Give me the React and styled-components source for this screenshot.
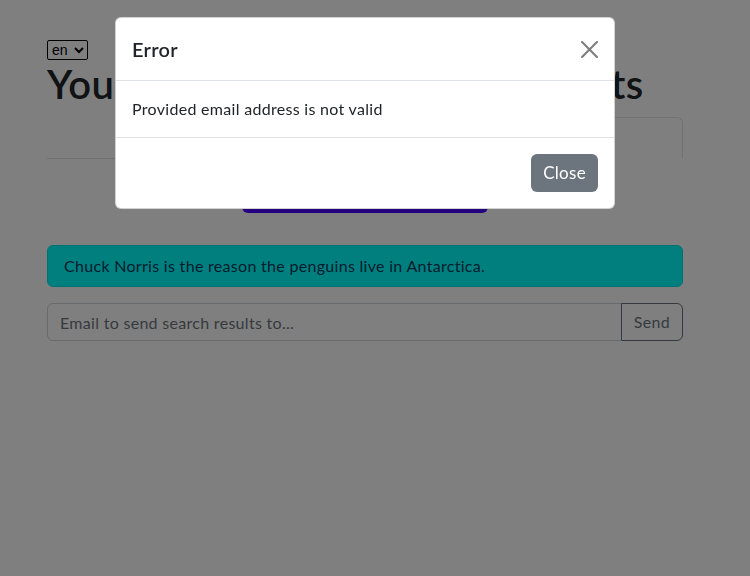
import styled, { createGlobalStyle } from "styled-components";

const GlobalStyle = createGlobalStyle`
  html, body {
    margin: 0;
    background: #fff;
  }
  body {
    font-family: Lato, "Liberation Sans", sans-serif;
    font-size: 16px;
    line-height: 1.5;
    letter-spacing: 0.3px;
    color: #212529;
  }
`;

const Page = styled.div`
  width: 636px;
  padding: 40px 0 0 47px;
`;

const LangSelect = styled.select`
  display: block;
  width: 41px;
  height: 20px;
  font-family: "Liberation Sans", sans-serif;
  font-size: 14px;
  color: #000;
  border: 1px solid #000;
  border-radius: 2px;
  background: #fff;
`;

const Title = styled.h1`
  margin: 0 0 9px;
  font-size: 40px;
  font-weight: 600;
  line-height: 1.2;
  letter-spacing: 0.3px;
  white-space: nowrap;
`;

const Tabs = styled.nav`
  display: flex;
  border-bottom: 1px solid #dee2e6;
`;

const Tab = styled.div`
  flex: 1;
  text-align: center;
  padding: 8px 16px;
  margin-bottom: -1px;
  border: 1px solid ${(p) => (p.$active ? "#dee2e6" : "transparent")};
  border-bottom-color: ${(p) => (p.$active ? "#fff" : "transparent")};
  border-radius: 6px 6px 0 0;
  background: ${(p) => (p.$active ? "#fff" : "transparent")};
  color: ${(p) => (p.$active ? "#495057" : "#0d6efd")};
`;

const ActionRow = styled.div`
  display: flex;
  justify-content: center;
  margin-top: 16px;
`;

const PrimaryButton = styled.button`
  width: 246px;
  height: 38px;
  border: none;
  border-radius: 6px;
  background: #4400ff;
  color: #fff;
  font: inherit;
`;

const Alert = styled.div`
  margin-top: 32px;
  padding: 8px 16px;
  border: 1px solid #00e5e5;
  border-radius: 6px;
  background: #00ffff;
  color: #053a5a;
`;

const InputGroup = styled.div`
  display: flex;
  margin-top: 16px;
`;

const EmailInput = styled.input`
  flex: 1;
  height: 38px;
  box-sizing: border-box;
  padding: 6px 12px;
  border: 1px solid #ced4da;
  border-radius: 6px 0 0 6px;
  font: inherit;
  letter-spacing: 0.3px;
  color: #212529;
  &::placeholder {
    color: #6c757d;
  }
`;

const OutlineButton = styled.button`
  height: 38px;
  padding: 6px 12px;
  margin-left: -1px;
  border: 1px solid #6c757d;
  border-radius: 0 6px 6px 0;
  background: transparent;
  color: #6c757d;
  font: inherit;
  letter-spacing: 0.3px;
`;

const Backdrop = styled.div`
  position: fixed;
  inset: 0;
  background: rgba(0, 0, 0, 0.5);
`;

const ModalLayer = styled.div`
  position: fixed;
  inset: 0;
  padding: 17px 20px 0 0;
`;

const Dialog = styled.div`
  width: 498px;
  margin: 0 auto;
  background: #fff;
  border: 1px solid rgba(0, 0, 0, 0.175);
  border-radius: 6px;
  overflow: hidden;
`;

const Header = styled.div`
  display: flex;
  align-items: center;
  justify-content: space-between;
  padding: 16px;
  border-bottom: 1px solid #dee2e6;
`;

const ModalTitle = styled.h5`
  margin: 0;
  font-size: 20px;
  font-weight: 600;
  line-height: 1.5;
`;

const CloseX = styled.button`
  display: flex;
  padding: 0;
  border: none;
  background: transparent;
  opacity: 0.5;
`;

const Body = styled.div`
  padding: 16px;
`;

const Footer = styled.div`
  display: flex;
  justify-content: flex-end;
  padding: 16px;
  border-top: 1px solid #dee2e6;
`;

const SecondaryButton = styled.button`
  height: 38px;
  padding: 6px 12px;
  border: none;
  border-radius: 6px;
  background: #6c757d;
  color: #fff;
  font: inherit;
  font-size: 17px;
  letter-spacing: 0.3px;
`;

export default function App() {
  return (
    <>
      <GlobalStyle />
      <Page>
        <LangSelect defaultValue="en">
          <option value="en">en</option>
        </LangSelect>
        <Title>Your favourite Chuck Norris facts</Title>
        <Tabs>
          <Tab>Random</Tab>
          <Tab $active>Search</Tab>
        </Tabs>
        <ActionRow>
          <PrimaryButton>Get a new joke</PrimaryButton>
        </ActionRow>
        <Alert>Chuck Norris is the reason the penguins live in Antarctica.</Alert>
        <InputGroup>
          <EmailInput placeholder="Email to send search results to..." />
          <OutlineButton>Send</OutlineButton>
        </InputGroup>
      </Page>
      <Backdrop />
      <ModalLayer>
        <Dialog>
          <Header>
            <ModalTitle>Error</ModalTitle>
            <CloseX aria-label="Close">
              <svg width="17" height="17" viewBox="0 0 16 16">
                <path
                  fill="#000"
                  d="M.293.293a1 1 0 0 1 1.414 0L8 6.586 14.293.293a1 1 0 1 1 1.414 1.414L9.414 8l6.293 6.293a1 1 0 0 1-1.414 1.414L8 9.414l-6.293 6.293a1 1 0 0 1-1.414-1.414L6.586 8 .293 1.707a1 1 0 0 1 0-1.414z"
                />
              </svg>
            </CloseX>
          </Header>
          <Body>Provided email address is not valid</Body>
          <Footer>
            <SecondaryButton>Close</SecondaryButton>
          </Footer>
        </Dialog>
      </ModalLayer>
    </>
  );
}
